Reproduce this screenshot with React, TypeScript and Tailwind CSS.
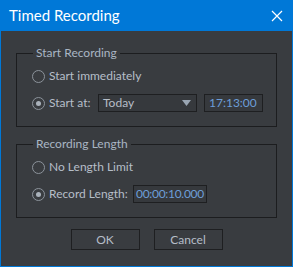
const Radio = ({ checked }: { checked?: boolean }) => (
  <span className="w-[13px] h-[13px] rounded-full border border-[#8c939b] flex items-center justify-center shrink-0">
    {checked && <span className="w-[5px] h-[5px] rounded-full bg-[#aab2bb]" />}
  </span>
);

const GroupBox = ({ title, children }: { title: string; children: React.ReactNode }) => (
  <fieldset className="border border-[#1c1d1f] h-[81px] mx-[15px]">
    <legend className="ml-[16px] px-[3px] text-[12px] leading-[14px] text-[#a9b6c4]">{title}</legend>
    <div className="pl-[15px] pt-[7px] flex flex-col gap-[9px]">{children}</div>
  </fieldset>
);

export default function App() {
  return (
    <div
      className="w-[293px] h-[267px] bg-[#0078d7] flex flex-col text-[#b6bec8]"
      style={{ fontFamily: 'Lato, "Noto Sans", sans-serif' }}
    >
      <div className="h-[31px] flex items-center justify-between pl-[9px] pr-[9px] text-white text-[15px]">
        <span>Timed Recording</span>
        <svg width="12" height="12" viewBox="0 0 12 12" className="mr-[1px]">
          <path d="M1 1L11 11M11 1L1 11" stroke="#fff" strokeWidth="1.2" />
        </svg>
      </div>
      <div className="flex-1 mx-[1px] mb-[1px] bg-[#393c40] pt-[15px] flex flex-col text-[12px] whitespace-nowrap">
        <GroupBox title="Start Recording">
          <div className="h-[18px] flex items-center gap-[4px]">
            <Radio />
            <span>Start immediately</span>
          </div>
          <div className="h-[18px] flex items-center">
            <Radio checked />
            <span className="ml-[4px] w-[49px] shrink-0">Start at:</span>
            <div className="w-[99px] h-[18px] border border-[#1e1f21] bg-[#36393d] flex items-center justify-between pl-[4px] pr-[5px]">
              <span>Today</span>
              <svg width="9" height="6" viewBox="0 0 9 6">
                <path d="M0 0H9L4.5 6Z" fill="#9aa6b3" />
              </svg>
            </div>
            <div className="ml-[7px] w-[59px] h-[18px] border border-[#1e1f21] bg-[#36393d] flex items-center pl-[4px] text-[#6d9ed8]">
              17:13:00
            </div>
          </div>
        </GroupBox>
        <div className="h-[10px]" />
        <GroupBox title="Recording Length">
          <div className="h-[18px] flex items-center gap-[4px]">
            <Radio />
            <span>No Length Limit</span>
          </div>
          <div className="h-[18px] flex items-center">
            <Radio checked />
            <span className="ml-[4px] w-[84px] shrink-0">Record Length:</span>
            <div className="w-[74px] h-[18px] border border-[#1e1f21] bg-[#36393d] flex items-center pl-[2px] text-[#6d9ed8] tracking-[-0.3px] overflow-hidden">
              00:00:10.000
            </div>
          </div>
        </GroupBox>
        <div className="mt-[11px] flex justify-center gap-[14px]">
          <button className="w-[69px] h-[21px] border border-[#1e1f21] bg-[#393c40] text-[#b6bec8]">OK</button>
          <button className="w-[69px] h-[21px] border border-[#1e1f21] bg-[#393c40] text-[#b6bec8]">Cancel</button>
        </div>
      </div>
    </div>
  );
}
